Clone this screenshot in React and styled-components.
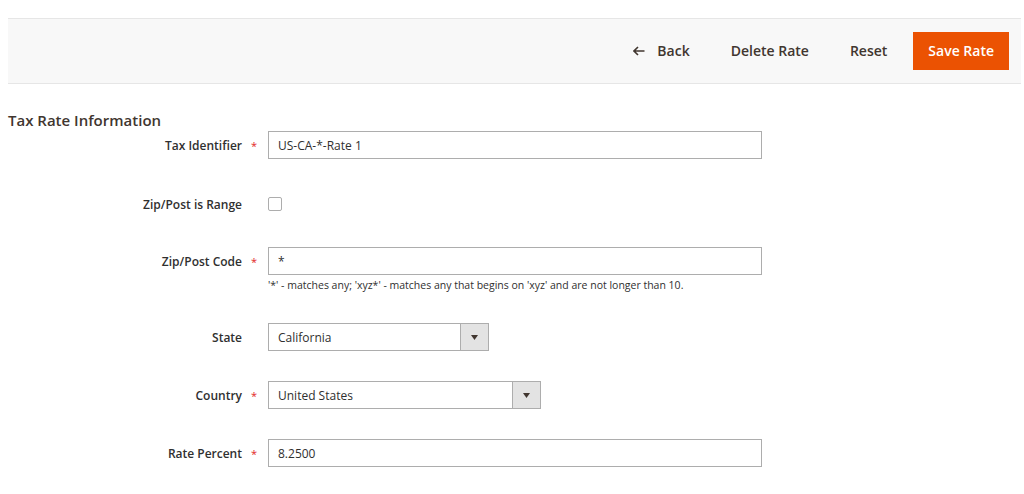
import styled, { createGlobalStyle } from "styled-components"

const GlobalStyle = createGlobalStyle`
  html, body {
    margin: 0;
    padding: 0;
    background: #fff;
    font-family: "Open Sans", "Noto Sans", sans-serif;
    color: #303030;
  }
  * { box-sizing: border-box; }
`

const Page = styled.div`
  padding: 18px 3px 0 8px;
`

const Toolbar = styled.div`
  display: flex;
  align-items: center;
  justify-content: flex-end;
  height: 66px;
  padding: 0 12px 0 0;
  background: #f8f8f8;
  border-top: 1px solid #e6e6e6;
  border-bottom: 1px solid #e6e6e6;
  gap: 11px;
`

const ActionButton = styled.button`
  display: flex;
  align-items: center;
  gap: 12px;
  height: 38px;
  padding: 0 14px;
  border: 1px solid ${({ $primary }) => ($primary ? "#eb5202" : "transparent")};
  background: ${({ $primary }) => ($primary ? "#eb5202" : "transparent")};
  color: ${({ $primary }) => ($primary ? "#fff" : "#41362f")};
  font-family: inherit;
  font-size: 14px;
  font-weight: 600;
  line-height: 1;
  cursor: pointer;
`

const Title = styled.h2`
  margin: 26px 0 1px;
  font-size: 15px;
  line-height: 20px;
  font-weight: 600;
  color: #41362f;
`

const Fieldset = styled.div`
  display: flex;
  flex-direction: column;
  gap: 30px;
`

const Row = styled.div`
  display: flex;
  align-items: flex-start;
  margin-top: ${({ $shift }) => $shift || 0}px;
`

const LabelCell = styled.div`
  display: flex;
  align-items: center;
  justify-content: flex-end;
  width: 260px;
  height: 28px;
  flex-shrink: 0;
`

const LabelText = styled.label`
  font-size: 12px;
  font-weight: 600;
  color: #303030;
`

const Marker = styled.span`
  width: 26px;
  padding-left: 9px;
  font-size: 11px;
  color: #e22626;
`

const Control = styled.div`
  display: flex;
  flex-direction: column;
`

const TextInput = styled.div`
  display: flex;
  align-items: center;
  width: ${({ $w }) => $w || 494}px;
  height: 28px;
  padding: 0 9px;
  border: 1px solid #adadad;
  background: #fff;
  font-size: 12px;
  color: #303030;
`

const Note = styled.div`
  margin-top: 3px;
  font-size: 10.5px;
  line-height: 15px;
  color: #303030;
`

const Check = styled.span`
  display: block;
  width: 14px;
  height: 14px;
  margin-top: 7px;
  border: 1px solid #adadad;
  border-radius: 2px;
  background: #fff;
`

const Select = styled.div`
  display: flex;
  width: ${({ $w }) => $w}px;
  height: 28px;
  border: 1px solid #adadad;
  background: #fff;
`

const SelectValue = styled.div`
  flex: 1;
  display: flex;
  align-items: center;
  padding: 0 9px;
  font-size: 12px;
  color: #303030;
`

const SelectToggle = styled.div`
  display: flex;
  align-items: center;
  justify-content: center;
  width: 28px;
  background: #e3e3e3;
  border-left: 1px solid #adadad;
`

const Arrow = () => (
  <svg width="7" height="5" viewBox="0 0 7 5">
    <path d="M0 0 H7 L3.5 5 Z" fill="#41362f" />
  </svg>
)

const BackIcon = () => (
  <svg width="12" height="10" viewBox="0 0 12 10">
    <path d="M11.5 5 H1.2 M5 1 L1 5 L5 9" stroke="#41362f" strokeWidth="1.6" fill="none" />
  </svg>
)

const Field = ({ label, required, children, shift }) => (
  <Row $shift={shift}>
    <LabelCell>
      <LabelText>{label}</LabelText>
      <Marker>{required ? "*" : ""}</Marker>
    </LabelCell>
    <Control>{children}</Control>
  </Row>
)

const Dropdown = ({ value, width }) => (
  <Select $w={width}>
    <SelectValue>{value}</SelectValue>
    <SelectToggle>
      <Arrow />
    </SelectToggle>
  </Select>
)

export default function App() {
  return (
    <Page>
      <GlobalStyle />
      <Toolbar>
        <ActionButton>
          <BackIcon />
          Back
        </ActionButton>
        <ActionButton>Delete Rate</ActionButton>
        <ActionButton>Reset</ActionButton>
        <ActionButton $primary>Save Rate</ActionButton>
      </Toolbar>
      <Title>Tax Rate Information</Title>
      <Fieldset>
        <Field label="Tax Identifier" required>
          <TextInput>US-CA-*-Rate 1</TextInput>
        </Field>
        <Field label="Zip/Post is Range" shift={1}>
          <Check />
        </Field>
        <Field label="Zip/Post Code" required shift={-1}>
          <TextInput>*</TextInput>
          <Note>'*' - matches any; 'xyz*' - matches any that begins on 'xyz' and are not longer than 10.</Note>
        </Field>
        <Field label="State">
          <Dropdown value="California" width={221} />
        </Field>
        <Field label="Country" required>
          <Dropdown value="United States" width={273} />
        </Field>
        <Field label="Rate Percent" required>
          <TextInput>8.2500</TextInput>
        </Field>
      </Fieldset>
    </Page>
  )
}
